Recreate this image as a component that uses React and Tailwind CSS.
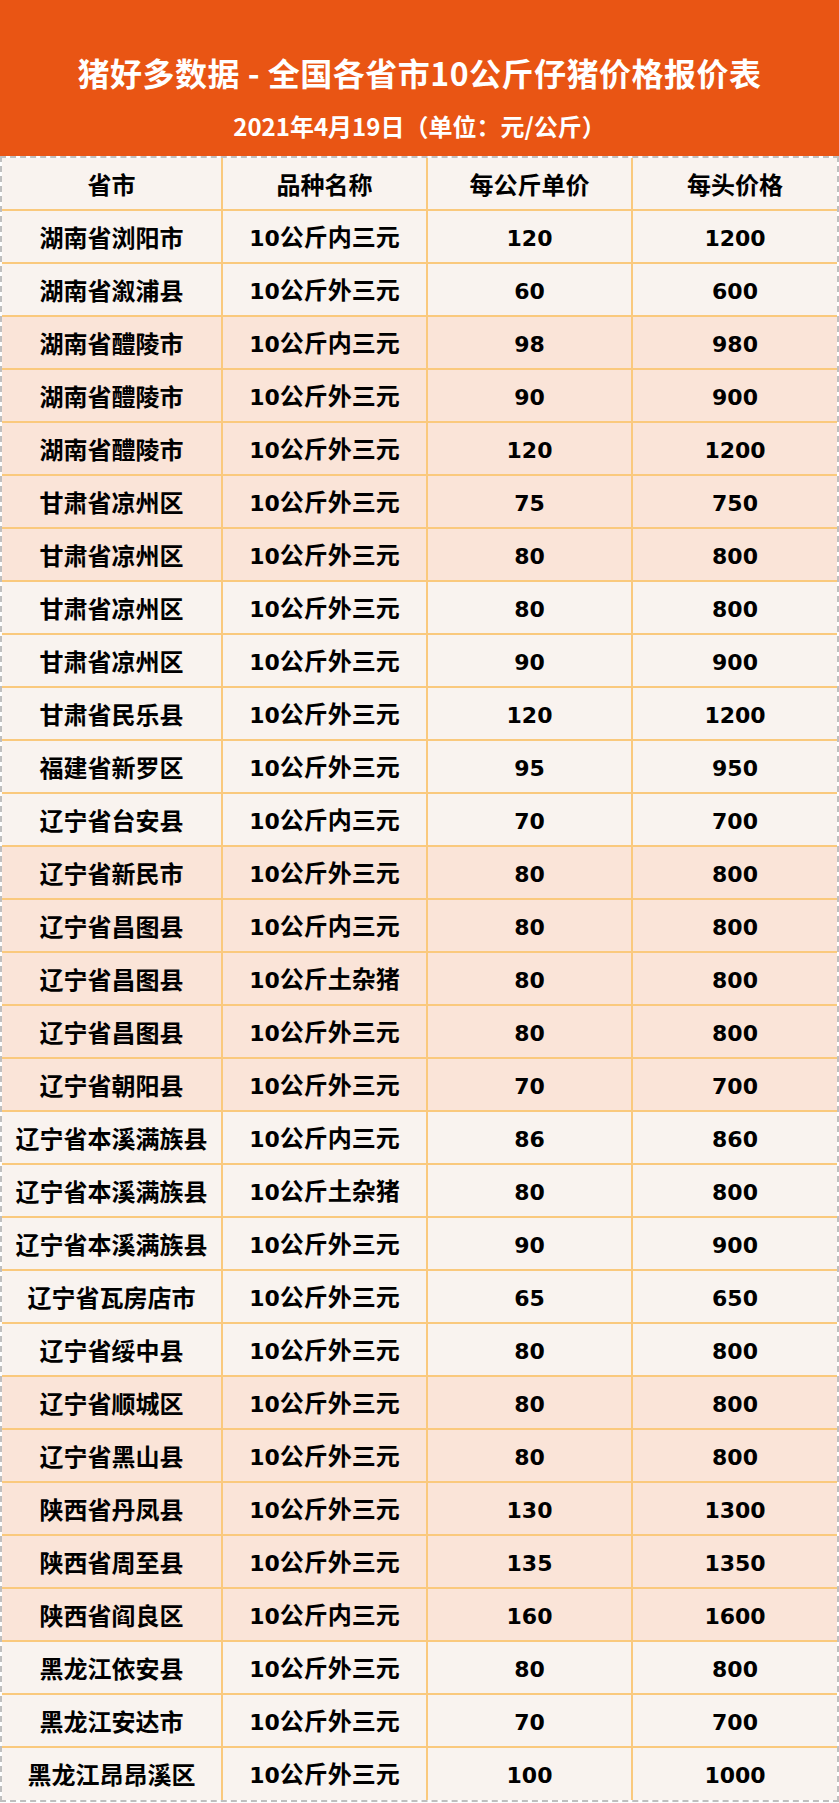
import React from "react";

const rows = [
  ["湖南省浏阳市", "10公斤内三元", "120", "1200", 0],
  ["湖南省溆浦县", "10公斤外三元", "60", "600", 0],
  ["湖南省醴陵市", "10公斤内三元", "98", "980", 1],
  ["湖南省醴陵市", "10公斤外三元", "90", "900", 1],
  ["湖南省醴陵市", "10公斤外三元", "120", "1200", 1],
  ["甘肃省凉州区", "10公斤外三元", "75", "750", 1],
  ["甘肃省凉州区", "10公斤外三元", "80", "800", 1],
  ["甘肃省凉州区", "10公斤外三元", "80", "800", 0],
  ["甘肃省凉州区", "10公斤外三元", "90", "900", 0],
  ["甘肃省民乐县", "10公斤外三元", "120", "1200", 0],
  ["福建省新罗区", "10公斤外三元", "95", "950", 0],
  ["辽宁省台安县", "10公斤内三元", "70", "700", 0],
  ["辽宁省新民市", "10公斤外三元", "80", "800", 1],
  ["辽宁省昌图县", "10公斤内三元", "80", "800", 1],
  ["辽宁省昌图县", "10公斤土杂猪", "80", "800", 1],
  ["辽宁省昌图县", "10公斤外三元", "80", "800", 1],
  ["辽宁省朝阳县", "10公斤外三元", "70", "700", 1],
  ["辽宁省本溪满族县", "10公斤内三元", "86", "860", 0],
  ["辽宁省本溪满族县", "10公斤土杂猪", "80", "800", 0],
  ["辽宁省本溪满族县", "10公斤外三元", "90", "900", 0],
  ["辽宁省瓦房店市", "10公斤外三元", "65", "650", 0],
  ["辽宁省绥中县", "10公斤外三元", "80", "800", 0],
  ["辽宁省顺城区", "10公斤外三元", "80", "800", 1],
  ["辽宁省黑山县", "10公斤外三元", "80", "800", 1],
  ["陕西省丹凤县", "10公斤外三元", "130", "1300", 1],
  ["陕西省周至县", "10公斤外三元", "135", "1350", 1],
  ["陕西省阎良区", "10公斤内三元", "160", "1600", 1],
  ["黑龙江依安县", "10公斤外三元", "80", "800", 0],
  ["黑龙江安达市", "10公斤外三元", "70", "700", 0],
  ["黑龙江昂昂溪区", "10公斤外三元", "100", "1000", 0],
];

const font = {
  fontFamily: '"Noto Sans CJK SC", "Noto Sans", sans-serif',
};

function Txt({ s }) {
  const parts = s.split(/(\d+)/).filter((p) => p !== "");
  return (
    <span>
      {parts.map((p, i) =>
        /^\d+$/.test(p) ? (
          <span key={i} className="font-['DejaVu_Sans'] text-[22px]">
            {p}
          </span>
        ) : (
          <span key={i}>{p}</span>
        )
      )}
    </span>
  );
}

function Row({ cells, peach, last }) {
  return (
    <div
      className={`grid grid-cols-[221px_205px_205px_1fr] ${
        last ? "h-[52px]" : "h-[53px] border-b-2 border-[#FAC97D]"
      } ${peach ? "bg-[#FAE4D8]" : "bg-[#F9F3EF]"}`}
    >
      {cells.map((c, i) => (
        <div
          key={i}
          className={`flex items-center justify-center text-[24px] font-bold text-black leading-none ${
            i < 3 ? "border-r-2 border-[#FAC97D]" : ""
          }`}
        >
          <Txt s={c} />
        </div>
      ))}
    </div>
  );
}

export default function App() {
  return (
    <div className="w-[839px] h-[1803px] bg-white" style={font}>
      <div className="h-[156px] bg-[#E95514] flex flex-col items-center text-white font-bold">
        <div className="pt-[56px] text-[32px] leading-[32px] tracking-[0.5px]">
          猪好多数据 - 全国各省市10公斤仔猪价格报价表
        </div>
        <div className="mt-[26px] text-[24px] leading-[24px]">
          2021年4月19日（单位：元/公斤）
        </div>
      </div>
      <div className="border-2 border-dashed border-[#BFBFBF]">
        <Row cells={["省市", "品种名称", "每公斤单价", "每头价格"]} peach={false} />
        {rows.map((r, i) => (
          <Row
            key={i}
            cells={r.slice(0, 4)}
            peach={r[4] === 1}
            last={i === rows.length - 1}
          />
        ))}
      </div>
    </div>
  );
}
